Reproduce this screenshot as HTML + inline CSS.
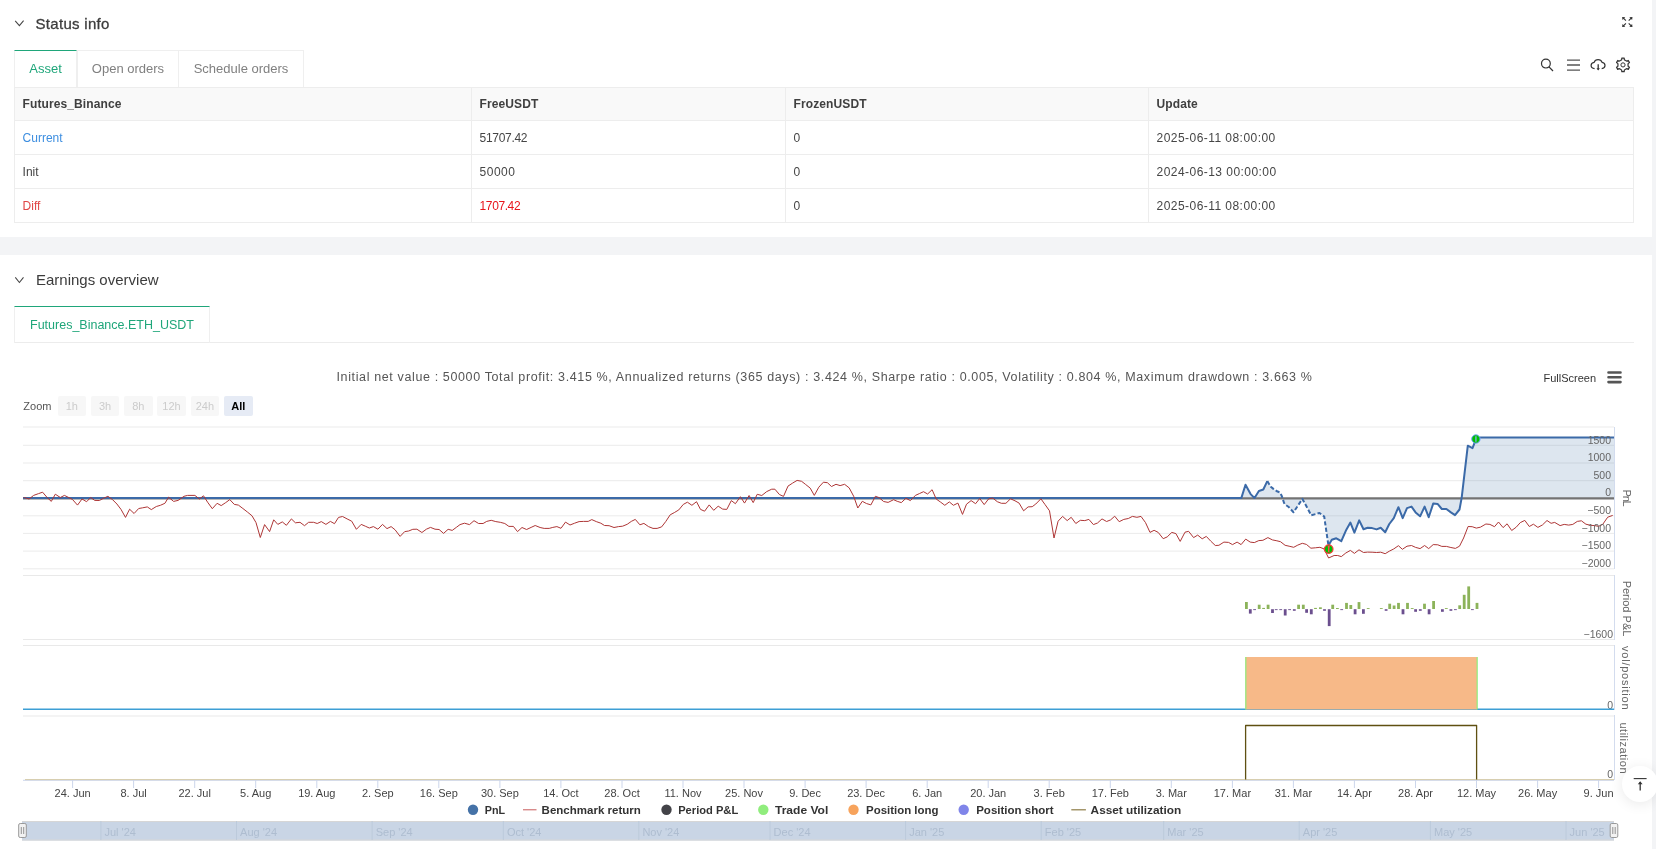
<!DOCTYPE html>
<html><head><meta charset="utf-8">
<style>
html,body{margin:0;padding:0;width:1656px;height:849px;overflow:hidden;background:#fff;font-family:"Liberation Sans",sans-serif;}
.a{position:absolute;white-space:nowrap;}
#strip{position:absolute;left:1652px;top:0;width:4px;height:849px;background:#f3f4f6;}
#band{position:absolute;left:0;top:237px;width:1652px;height:18px;background:#f3f4f6;}
.h2{font-size:15px;color:#3c3c3c;}
.tab{position:absolute;top:50px;height:37px;border:1px solid #efefef;border-bottom:none;box-sizing:border-box;font-size:13px;color:#808080;text-align:center;line-height:36px;}
table.t{position:absolute;left:14px;top:87px;border-collapse:collapse;font-size:12px;color:#454545;}
table.t td{border:1px solid #ededed;height:34px;padding:0 0 0 7.6px;box-sizing:border-box;}
.zb{position:absolute;top:396px;width:28.5px;height:19.5px;background:#f7f7f7;border-radius:2px;font-size:11px;color:#ccc;text-align:center;line-height:21px;}
table.t tr.hd td{letter-spacing:0.1px;height:33px;background:#f9f9f9;font-weight:bold;color:#404040;}
</style></head><body>
<div id="wrap" style="position:absolute;left:0;top:0;width:1656px;height:849px;will-change:transform;">
<div id="strip"></div>
<div id="band"></div>

<!-- Status info header -->
<svg class="a" style="left:8px;top:12px" width="24" height="24" viewBox="8 12 24 24"><path d="M15.2 20.9 L19.4 25.6 L23.6 20.7" fill="none" stroke="#444" stroke-width="1.05"/></svg>
<div class="a h2" style="left:35.5px;top:15px;letter-spacing:0.3px;-webkit-text-stroke:0.3px #3c3c3c;">Status info</div>
<svg class="a" style="left:1618px;top:13px" width="18" height="18" viewBox="1618 13 18 18"><g stroke="#333" stroke-width="1.1" fill="none"><path d="M1625.9 20.6 L1623.4 18.1 M1628.7 20.6 L1631.2 18.1 M1625.9 23.4 L1623.4 25.9 M1628.7 23.4 L1631.2 25.9"/></g><g fill="#333"><path d="M1622.1 16.9 L1625.3 17.3 L1622.5 20.1Z M1632.5 16.9 L1629.3 17.3 L1632.1 20.1Z M1622.1 27.1 L1625.3 26.7 L1622.5 23.9Z M1632.5 27.1 L1629.3 26.7 L1632.1 23.9Z"/></g></svg>

<!-- tabs -->
<div class="tab" style="left:14px;width:63px;border-top:1px solid #1fa67a;color:#1fa67a;line-height:35px;">Asset</div>
<div class="tab" style="left:77px;width:102px;">Open orders</div>
<div class="tab" style="left:178px;width:126px;">Schedule orders</div>

<!-- toolbar icons -->
<svg class="a" style="left:1538px;top:56px" width="100" height="20" viewBox="1538 56 100 20">
<g fill="none" stroke="#333" stroke-width="1.2">
<circle cx="1545.9" cy="63.6" r="4.4"/><path d="M1549 66.8 L1553 71"/>
<path d="M1567 60.1 h13 M1567 65 h13 M1567 70.1 h13" stroke="#555" stroke-width="1.3"/>
<path d="M1594.6 68.6 C1592.6 68.4 1591.1 67.2 1591.1 65.5 C1591.1 63.8 1592.4 62.6 1594.1 62.4 C1594.7 60.7 1596.2 59.6 1598.1 59.6 C1600 59.6 1601.5 60.8 1602.1 62.4 C1603.8 62.6 1605 63.9 1605 65.5 C1605 67.2 1603.6 68.4 1601.7 68.6"/>
<path d="M1598.2 64.3 V69.6" stroke-width="1.3"/><path d="M1596.5 68.3 L1598.2 70.6 L1599.9 68.3 Z" fill="#333" stroke="none"/>
<circle cx="1623" cy="64.9" r="2.1" stroke-width="1"/>
<path d="M1620.50 60.57 L1621.69 59.66 L1621.80 58.10 L1624.20 58.10 L1624.31 59.66 L1625.50 60.57 L1626.88 61.15 L1628.29 60.46 L1629.48 62.54 L1628.19 63.41 L1628.00 64.90 L1628.19 66.39 L1629.48 67.26 L1628.29 69.34 L1626.88 68.65 L1625.50 69.23 L1624.31 70.14 L1624.20 71.70 L1621.80 71.70 L1621.69 70.14 L1620.50 69.23 L1619.12 68.65 L1617.71 69.34 L1616.52 67.26 L1617.81 66.39 L1618.00 64.90 L1617.81 63.41 L1616.52 62.54 L1617.71 60.46 L1619.12 61.15Z" stroke-linejoin="round"/>
</g></svg>

<table class="t">
<tr class="hd" style="height:33px"><td style="width:457px">Futures_Binance</td><td style="width:314px">FreeUSDT</td><td style="width:363px">FrozenUSDT</td><td style="width:485px">Update</td></tr>
<tr><td style="color:#3d8ee0">Current</td><td style="letter-spacing:-0.3px">51707.42</td><td>0</td><td style="letter-spacing:0.45px">2025-06-11 08:00:00</td></tr>
<tr><td>Init</td><td style="letter-spacing:0.5px">50000</td><td>0</td><td style="letter-spacing:0.45px">2024-06-13 00:00:00</td></tr>
<tr><td style="color:#e04545">Diff</td><td style="color:#e8141b;letter-spacing:-0.4px">1707.42</td><td>0</td><td style="letter-spacing:0.45px">2025-06-11 08:00:00</td></tr>
</table>

<!-- Earnings overview -->
<svg class="a" style="left:8px;top:270px" width="24" height="24" viewBox="8 270 24 24"><path d="M15.3 277.3 L19.4 282.5 L23.5 277.3" fill="none" stroke="#444" stroke-width="1.05"/></svg>
<div class="a h2" style="left:36px;top:271px;">Earnings overview</div>
<div class="a" style="left:14px;top:342px;width:1620px;height:1px;background:#ececec"></div>
<div class="tab" style="left:14px;top:306px;width:196px;height:37px;border-top:1px solid #1fa67a;color:#1fa67a;font-size:12.5px;line-height:37px;">Futures_Binance.ETH_USDT</div>

<!-- CHART -->
<div class="a" style="left:0;width:1649px;top:370px;text-align:center;font-size:12.5px;letter-spacing:0.63px;color:#555;">Initial net value : 50000 Total profit: 3.415 %, Annualized returns (365 days) : 3.424 %, Sharpe ratio : 0.005, Volatility : 0.804 %, Maximum drawdown : 3.663 %</div>
<div class="a" style="left:1543.5px;top:372px;font-size:11px;color:#333;">FullScreen</div>
<svg class="a" style="left:1606px;top:370px" width="18" height="15" viewBox="0 0 18 15"><g stroke="#555" stroke-width="2.6" stroke-linecap="round"><path d="M2.5 2.5h12M2.5 7.3h12M2.5 12.1h12"/></g></svg>
<div class="a" style="left:23.3px;top:400px;font-size:11px;color:#555;">Zoom</div>
<div class="zb" style="left:57.5px">1h</div>
<div class="zb" style="left:90.8px">3h</div>
<div class="zb" style="left:124px">8h</div>
<div class="zb" style="left:157.3px">12h</div>
<div class="zb" style="left:190.6px">24h</div>
<div class="zb" style="left:224px;background:#e6ebf5;color:#000;font-weight:bold;">All</div>
<div class="a" style="left:1622px;top:766px;width:36px;height:36px;border-radius:50%;background:#fff;box-shadow:0 2px 14px rgba(0,0,0,0.09);"></div>
<svg class="a" style="left:1630px;top:774px" width="20" height="20" viewBox="1630 774 20 20"><path d="M1633.7 778.6h12.9" stroke="#333" stroke-width="1.1"/><path d="M1640.2 790.5v-8.5" stroke="#333" stroke-width="1.3"/><path d="M1637.8 784.3l2.4-3l2.4 3z" fill="#333"/></svg>
<svg class="a" style="left:0;top:0" width="1656" height="849" viewBox="0 0 1656 849">
<line x1="23" x2="1614" y1="427.0" y2="427.0" stroke="#ebebeb" stroke-width="1"/>
<line x1="23" x2="1614" y1="445.3" y2="445.3" stroke="#ebebeb" stroke-width="1"/>
<line x1="23" x2="1614" y1="463.0" y2="463.0" stroke="#ebebeb" stroke-width="1"/>
<line x1="23" x2="1614" y1="480.7" y2="480.7" stroke="#ebebeb" stroke-width="1"/>
<line x1="23" x2="1614" y1="515.8" y2="515.8" stroke="#ebebeb" stroke-width="1"/>
<line x1="23" x2="1614" y1="533.4" y2="533.4" stroke="#ebebeb" stroke-width="1"/>
<line x1="23" x2="1614" y1="551.1" y2="551.1" stroke="#ebebeb" stroke-width="1"/>
<line x1="23" x2="1614" y1="568.8" y2="568.8" stroke="#ebebeb" stroke-width="1"/>
<line x1="23" x2="1614" y1="575.5" y2="575.5" stroke="#e9e9e9" stroke-width="1"/>
<line x1="23" x2="1614" y1="639.5" y2="639.5" stroke="#e9e9e9" stroke-width="1"/>
<line x1="23" x2="1614" y1="645.5" y2="645.5" stroke="#e9e9e9" stroke-width="1"/>
<line x1="23" x2="1614" y1="716" y2="716" stroke="#e9e9e9" stroke-width="1"/>
<line x1="1614.5" x2="1614.5" y1="427" y2="569" stroke="#d3dcee" stroke-width="1"/>
<line x1="1614.5" x2="1614.5" y1="575" y2="640" stroke="#d3dcee" stroke-width="1"/>
<line x1="1614.5" x2="1614.5" y1="645" y2="710" stroke="#d3dcee" stroke-width="1"/>
<line x1="1614.5" x2="1614.5" y1="715" y2="780" stroke="#d3dcee" stroke-width="1"/>
<polygon points="1241.4,498.0 1241.4,497.9 1245.5,484.7 1250.6,494.1 1254.5,498.0 1258.9,491.0 1263.3,489.5 1267.3,481.1 1270.8,486.8 1273.7,489.1 1277.0,491.3 1279.8,492.4 1281.7,495.7 1284.0,502.8 1285.4,504.7 1288.7,507.0 1293.5,512.2 1302.4,498.9 1311.3,515.3 1319.5,513.0 1324.2,516.5 1328.4,545.4 1331.8,539.8 1336.3,538.3 1341.3,541.2 1345.8,530.8 1350.4,522.6 1354.4,532.6 1359.2,520.4 1363.5,529.2 1367.6,527.8 1372.1,528.1 1376.6,529.4 1380.7,527.8 1385.2,532.3 1389.3,524.0 1393.8,518.1 1398.4,507.2 1402.7,518.1 1407.0,508.1 1411.5,506.6 1415.6,512.4 1420.1,516.3 1424.6,506.6 1428.7,517.2 1433.2,503.6 1437.8,504.1 1441.8,509.0 1446.4,509.0 1450.9,512.4 1455.0,515.1 1459.5,509.5 1461.7,497.6 1467.8,445.7 1472.5,448.1 1476.0,439.1 1480.5,437.4 1614.0,437.4 1614.0,498.0" fill="#4572a7" fill-opacity="0.18"/>
<line x1="23" x2="1614" y1="498.4" y2="498.4" stroke="#737373" stroke-width="2.1"/>
<polyline points="23.0,497.9 1241.4,497.9 1245.5,484.7 1250.6,494.1 1254.5,498.0 1258.9,491.0 1263.3,489.5 1267.3,481.1" fill="none" stroke="#3b6aa8" stroke-width="2" stroke-linejoin="round"/>
<polyline points="1267.3,481.1 1270.8,486.8 1273.7,489.1 1277.0,491.3 1279.8,492.4 1281.7,495.7 1284.0,502.8 1285.4,504.7 1288.7,507.0 1293.5,512.2 1302.4,498.9 1311.3,515.3 1319.5,513.0 1324.2,516.5 1328.4,545.4" fill="none" stroke="#3b6aa8" stroke-width="2" stroke-dasharray="4.2,2.2" stroke-linejoin="round"/>
<polyline points="1328.4,545.4 1331.8,539.8 1336.3,538.3 1341.3,541.2 1345.8,530.8 1350.4,522.6 1354.4,532.6 1359.2,520.4 1363.5,529.2 1367.6,527.8 1372.1,528.1 1376.6,529.4 1380.7,527.8 1385.2,532.3 1389.3,524.0 1393.8,518.1 1398.4,507.2 1402.7,518.1 1407.0,508.1 1411.5,506.6 1415.6,512.4 1420.1,516.3 1424.6,506.6 1428.7,517.2 1433.2,503.6 1437.8,504.1 1441.8,509.0 1446.4,509.0 1450.9,512.4 1455.0,515.1 1459.5,509.5 1461.7,497.6 1467.8,445.7 1472.5,448.1 1476.0,439.1 1480.5,437.4 1614.0,437.4" fill="none" stroke="#3b6aa8" stroke-width="2" stroke-linejoin="round"/>
<polyline points="23.5,497.8 24.5,497.6 29.1,499.0 33.6,495.4 38.6,493.6 42.6,492.2 47.2,497.6 51.3,501.4 55.3,494.2 60.3,497.5 64.4,495.4 68.9,497.6 72.5,499.5 77.5,505.1 82.0,499.0 86.6,501.7 90.7,497.5 94.7,500.4 99.3,500.5 103.3,498.4 107.9,496.3 112.4,499.5 116.9,504.0 121.0,509.4 125.5,517.4 129.6,509.2 134.1,513.5 138.7,508.5 142.7,507.8 147.3,506.9 151.3,509.6 156.3,506.5 160.4,505.3 164.9,503.3 168.6,497.2 173.6,501.4 178.1,500.4 184.0,496.3 187.6,495.4 194.9,495.4 199.4,499.0 203.5,495.8 207.6,502.2 212.3,508.7 217.1,503.3 221.2,505.6 225.7,502.6 229.8,499.6 234.3,504.4 238.4,505.1 242.9,508.5 247.4,512.0 252.0,515.8 256.0,522.6 260.3,537.5 264.6,524.6 269.6,531.6 273.7,519.8 277.8,524.4 282.3,521.9 286.4,525.3 291.4,518.9 295.4,522.8 300.0,522.3 304.5,525.7 308.6,522.3 313.6,522.3 317.2,523.5 321.3,521.6 325.9,524.4 330.4,521.4 334.5,523.7 338.5,517.4 342.6,516.5 347.1,518.9 351.7,521.2 356.4,529.3 361.2,524.4 365.3,526.2 369.3,528.0 373.4,526.6 377.9,529.2 382.5,524.4 387.0,528.6 391.1,526.6 395.1,529.8 400.1,536.4 404.7,531.6 408.7,531.0 412.8,529.3 416.9,529.2 421.9,532.5 426.4,529.2 430.5,527.4 435.0,529.2 439.1,529.5 443.6,533.4 448.1,529.3 452.2,530.4 456.7,527.1 460.0,524.6 464.5,523.2 469.5,524.6 474.0,520.7 478.6,523.5 483.1,523.5 486.7,521.4 491.2,520.3 495.8,521.6 500.3,522.3 504.8,523.5 508.9,526.4 513.4,526.4 517.5,531.6 522.0,527.5 526.6,529.5 531.1,527.4 535.2,525.5 540.1,527.5 544.2,528.4 549.2,528.4 552.8,527.4 556.9,526.6 561.0,528.3 565.5,522.1 570.0,525.0 574.6,523.2 579.1,521.6 583.6,521.4 588.2,521.4 591.8,519.6 596.3,521.6 600.8,523.2 604.5,525.5 609.1,525.7 614.0,527.5 618.6,526.6 622.6,526.2 627.2,524.3 631.3,521.4 635.3,519.4 639.9,524.8 643.9,523.4 648.5,526.6 653.0,528.4 657.1,528.4 661.6,526.9 665.7,521.6 670.2,514.8 674.3,512.6 678.8,509.9 683.3,504.4 687.4,502.2 691.9,505.3 696.5,501.7 700.5,509.4 704.6,511.2 709.2,504.9 713.7,510.3 718.2,506.2 722.7,509.1 726.8,509.4 731.3,500.6 735.4,503.7 740.4,496.7 744.5,503.1 749.1,495.5 753.2,502.6 757.2,494.3 761.8,495.5 766.7,491.6 771.7,489.2 774.9,489.2 779.4,494.5 783.5,496.4 788.0,486.1 792.6,483.1 797.1,480.4 801.6,481.3 805.7,484.5 810.2,488.1 814.3,495.4 818.8,487.2 823.4,482.2 827.4,482.7 831.5,486.5 836.0,484.3 840.1,485.6 844.6,484.3 849.2,487.9 853.7,496.3 857.8,508.0 862.3,501.3 866.4,503.5 870.9,504.9 875.4,496.3 879.1,497.6 883.6,501.5 888.1,502.4 893.6,499.7 897.2,501.3 901.3,502.6 905.9,498.3 910.4,500.6 915.4,495.4 919.4,493.6 923.5,491.7 927.6,494.0 932.1,489.7 936.2,499.0 940.7,502.2 944.8,505.3 949.3,501.9 953.4,505.3 957.9,503.1 962.5,514.4 966.5,504.2 971.1,500.6 975.6,503.7 979.7,498.5 984.2,504.6 988.7,498.8 992.8,498.1 997.3,501.7 1001.4,503.3 1005.9,503.3 1010.5,498.8 1015.0,500.8 1019.1,503.1 1023.6,510.8 1028.1,506.9 1032.2,506.7 1035.8,504.0 1040.9,498.8 1045.0,504.5 1049.5,510.8 1054.0,538.0 1058.1,521.2 1062.6,516.4 1067.2,520.6 1071.2,517.3 1075.8,523.5 1080.3,520.3 1084.8,520.6 1088.9,519.4 1093.4,524.6 1097.5,523.0 1102.0,518.9 1106.6,521.5 1110.6,519.9 1114.7,516.2 1119.2,521.7 1123.8,519.4 1128.3,518.5 1132.4,516.4 1136.9,517.3 1141.0,516.4 1145.5,522.6 1150.0,532.4 1154.1,530.3 1158.2,532.4 1163.2,538.7 1167.2,536.9 1171.8,532.4 1175.9,533.6 1180.2,541.4 1185.0,532.2 1188.6,531.3 1193.6,537.6 1197.7,535.1 1202.2,538.8 1206.3,536.4 1210.8,541.2 1215.3,545.5 1218.9,545.3 1223.9,542.1 1228.5,542.4 1232.5,544.6 1237.1,542.1 1241.1,544.6 1245.7,539.1 1250.2,542.1 1254.3,542.6 1258.8,540.6 1262.9,540.3 1267.9,537.6 1272.4,539.9 1276.9,540.8 1280.5,541.7 1285.1,545.3 1289.1,546.2 1293.7,547.3 1297.8,545.1 1302.3,543.3 1306.4,544.4 1310.9,548.2 1315.4,547.8 1319.9,547.3 1324.0,548.9 1328.6,558.0 1334.1,555.5 1337.7,555.5 1341.3,556.6 1345.8,553.0 1350.4,550.4 1354.4,553.4 1359.0,549.8 1363.5,552.5 1367.6,552.1 1372.1,552.2 1376.6,552.5 1380.7,552.2 1385.2,553.7 1389.3,551.2 1393.8,548.9 1398.4,545.7 1402.4,549.3 1407.0,546.2 1411.5,545.5 1415.6,547.4 1420.1,548.6 1424.6,545.5 1428.7,548.6 1433.2,544.6 1437.8,544.8 1441.8,546.4 1446.4,546.4 1450.9,547.5 1455.4,548.4 1459.5,546.2 1463.6,538.0 1468.1,526.5 1472.2,526.7 1476.3,528.1 1480.4,527.2 1485.9,524.0 1489.9,524.4 1494.5,526.7 1498.5,522.0 1503.1,527.6 1507.1,523.8 1511.7,530.5 1516.2,527.2 1520.3,522.6 1524.8,520.4 1529.3,526.5 1533.4,524.2 1537.9,527.4 1542.5,524.9 1547.0,520.5 1551.1,523.3 1554.7,522.4 1560.1,525.6 1564.2,524.4 1568.7,525.1 1572.8,524.4 1577.3,521.4 1581.4,520.8 1585.9,524.2 1590.5,525.3 1594.5,525.6 1598.6,526.3 1602.7,524.4 1607.7,517.2 1612.7,515.4" fill="none" stroke="#ad3535" stroke-width="1" stroke-linejoin="round"/>
<circle cx="1328.7" cy="549.1" r="4.3" fill="#00c000" stroke="#ff3b3b" stroke-width="1.2"/><path d="M1328.7 546.5 v5.5" stroke="#ff4b4b" stroke-width="1.4"/><circle cx="1328.7" cy="546.8" r="1" fill="#ff4b4b"/>
<circle cx="1475.9" cy="439" r="4.2" fill="#00c000" stroke="#7aa6ff" stroke-width="1"/><path d="M1475.9 436.3 v5.5" stroke="#79b0d8" stroke-width="1.4"/>
<text x="1611" y="443.6" text-anchor="end" font-size="10.5" fill="#666" font-family="Liberation Sans">1500</text>
<text x="1611" y="461.3" text-anchor="end" font-size="10.5" fill="#666" font-family="Liberation Sans">1000</text>
<text x="1611" y="479.0" text-anchor="end" font-size="10.5" fill="#666" font-family="Liberation Sans">500</text>
<text x="1611" y="496.3" text-anchor="end" font-size="10.5" fill="#666" font-family="Liberation Sans">0</text>
<text x="1611" y="514.1" text-anchor="end" font-size="10.5" fill="#666" font-family="Liberation Sans">−500</text>
<text x="1611" y="531.7" text-anchor="end" font-size="10.5" fill="#666" font-family="Liberation Sans">−1000</text>
<text x="1611" y="549.4" text-anchor="end" font-size="10.5" fill="#666" font-family="Liberation Sans">−1500</text>
<text x="1611" y="567.1" text-anchor="end" font-size="10.5" fill="#666" font-family="Liberation Sans">−2000</text>
<text x="1626.5" y="498.1" transform="rotate(90 1626.5 498.1)" text-anchor="middle" dominant-baseline="central" font-size="11" fill="#666" font-family="Liberation Sans" textLength="17" lengthAdjust="spacing">PnL</text>
<text x="1626.5" y="608.5" transform="rotate(90 1626.5 608.5)" text-anchor="middle" dominant-baseline="central" font-size="11" fill="#666" font-family="Liberation Sans" textLength="55.7" lengthAdjust="spacing">Period P&amp;L</text>
<text x="1625.6" y="677.8" transform="rotate(90 1625.6 677.8)" text-anchor="middle" dominant-baseline="central" font-size="11" fill="#666" font-family="Liberation Sans" textLength="63.6" lengthAdjust="spacing">vol/position</text>
<text x="1624.4" y="748" transform="rotate(90 1624.4 748)" text-anchor="middle" dominant-baseline="central" font-size="11" fill="#666" font-family="Liberation Sans" textLength="51.2" lengthAdjust="spacing">utilization</text>
<text x="1613" y="638" text-anchor="end" font-size="10.5" fill="#666" font-family="Liberation Sans">−1600</text>
<text x="1613" y="708.5" text-anchor="end" font-size="10.5" fill="#666" font-family="Liberation Sans">0</text>
<text x="1613" y="778" text-anchor="end" font-size="10.5" fill="#666" font-family="Liberation Sans">0</text>
<rect x="1245.0" y="602.0" width="2.8" height="7.0" fill="#8cb35a"/>
<rect x="1248.9" y="609.2" width="2.8" height="4.4" fill="#6b4f8e"/>
<rect x="1253.2" y="609.2" width="2.8" height="0.9" fill="#6b4f8e"/>
<rect x="1257.8" y="604.7" width="2.8" height="4.3" fill="#8cb35a"/>
<rect x="1262.2" y="607.9" width="2.8" height="1.1" fill="#8cb35a"/>
<rect x="1266.7" y="604.7" width="2.8" height="4.3" fill="#8cb35a"/>
<rect x="1271.1" y="609.2" width="2.8" height="3.8" fill="#6b4f8e"/>
<rect x="1274.8" y="609.2" width="2.8" height="0.9" fill="#6b4f8e"/>
<rect x="1279.3" y="609.2" width="2.8" height="0.9" fill="#6b4f8e"/>
<rect x="1283.8" y="609.2" width="2.8" height="6.3" fill="#6b4f8e"/>
<rect x="1288.2" y="609.2" width="2.8" height="0.9" fill="#6b4f8e"/>
<rect x="1292.9" y="609.2" width="2.8" height="1.6" fill="#6b4f8e"/>
<rect x="1297.2" y="604.7" width="2.8" height="4.3" fill="#8cb35a"/>
<rect x="1301.9" y="604.7" width="2.8" height="4.3" fill="#8cb35a"/>
<rect x="1305.2" y="609.2" width="2.8" height="3.6" fill="#6b4f8e"/>
<rect x="1309.9" y="609.2" width="2.8" height="5.1" fill="#6b4f8e"/>
<rect x="1314.1" y="607.9" width="2.8" height="1.1" fill="#8cb35a"/>
<rect x="1319.0" y="607.3" width="2.8" height="1.7" fill="#8cb35a"/>
<rect x="1323.1" y="609.2" width="2.8" height="1.6" fill="#6b4f8e"/>
<rect x="1327.8" y="609.2" width="2.8" height="16.9" fill="#6b4f8e"/>
<rect x="1331.3" y="604.7" width="2.8" height="4.3" fill="#8cb35a"/>
<rect x="1336.0" y="608.0" width="2.8" height="1.0" fill="#8cb35a"/>
<rect x="1340.3" y="609.2" width="2.8" height="0.9" fill="#6b4f8e"/>
<rect x="1345.1" y="602.9" width="2.8" height="6.1" fill="#8cb35a"/>
<rect x="1349.4" y="605.0" width="2.8" height="4.0" fill="#8cb35a"/>
<rect x="1353.7" y="609.2" width="2.8" height="5.1" fill="#6b4f8e"/>
<rect x="1357.6" y="602.1" width="2.8" height="6.9" fill="#8cb35a"/>
<rect x="1362.0" y="609.2" width="2.8" height="4.6" fill="#6b4f8e"/>
<rect x="1366.8" y="608.1" width="2.8" height="0.9" fill="#8cb35a"/>
<rect x="1379.9" y="608.1" width="2.8" height="0.9" fill="#8cb35a"/>
<rect x="1384.7" y="609.2" width="2.8" height="1.6" fill="#6b4f8e"/>
<rect x="1388.3" y="603.7" width="2.8" height="5.3" fill="#8cb35a"/>
<rect x="1392.7" y="605.5" width="2.8" height="3.5" fill="#8cb35a"/>
<rect x="1397.1" y="602.9" width="2.8" height="6.1" fill="#8cb35a"/>
<rect x="1401.6" y="609.2" width="2.8" height="5.1" fill="#6b4f8e"/>
<rect x="1406.1" y="602.9" width="2.8" height="6.1" fill="#8cb35a"/>
<rect x="1410.8" y="608.1" width="2.8" height="0.9" fill="#8cb35a"/>
<rect x="1414.2" y="609.2" width="2.8" height="2.6" fill="#6b4f8e"/>
<rect x="1418.9" y="609.2" width="2.8" height="1.6" fill="#6b4f8e"/>
<rect x="1423.1" y="603.7" width="2.8" height="5.3" fill="#8cb35a"/>
<rect x="1427.7" y="609.2" width="2.8" height="5.1" fill="#6b4f8e"/>
<rect x="1432.2" y="601.0" width="2.8" height="8.0" fill="#8cb35a"/>
<rect x="1441.0" y="609.2" width="2.8" height="2.6" fill="#6b4f8e"/>
<rect x="1444.9" y="608.1" width="2.8" height="0.9" fill="#8cb35a"/>
<rect x="1449.5" y="609.2" width="2.8" height="1.6" fill="#6b4f8e"/>
<rect x="1454.0" y="609.2" width="2.8" height="0.9" fill="#6b4f8e"/>
<rect x="1458.3" y="605.3" width="2.8" height="3.7" fill="#8cb35a"/>
<rect x="1462.8" y="594.8" width="2.8" height="14.2" fill="#8cb35a"/>
<rect x="1467.3" y="586.4" width="2.8" height="22.6" fill="#8cb35a"/>
<rect x="1471.0" y="609.2" width="2.8" height="0.9" fill="#6b4f8e"/>
<rect x="1475.6" y="602.9" width="2.8" height="6.1" fill="#8cb35a"/>
<line x1="23" x2="1614" y1="709.3" y2="709.3" stroke="#3d9fd5" stroke-width="1.6"/>
<rect x="1245.5" y="657" width="231.5" height="52.5" fill="#f7b988"/>
<line x1="1245.8" x2="1245.8" y1="657" y2="709.5" stroke="#90ed7d" stroke-width="1.2"/>
<line x1="1477.2" x2="1477.2" y1="657" y2="709.5" stroke="#90ed7d" stroke-width="1.2"/>
<line x1="23" x2="1614" y1="780.3" y2="780.3" stroke="#ccd6eb" stroke-width="1"/>
<line x1="25" x2="1614" y1="779.6" y2="779.6" stroke="#d3c9a8" stroke-width="1"/>
<polyline points="1245.6,779.5 1245.6,725.5 1476.6,725.5 1476.6,779.5" fill="none" stroke="#5f5012" stroke-width="1.3" stroke-linejoin="round"/>
<line x1="72.6" x2="72.6" y1="780" y2="788" stroke="#ccd6eb" stroke-width="1"/>
<text x="72.6" y="796.9" text-anchor="middle" font-size="11" fill="#444" font-family="Liberation Sans">24. Jun</text>
<line x1="133.6" x2="133.6" y1="780" y2="788" stroke="#ccd6eb" stroke-width="1"/>
<text x="133.6" y="796.9" text-anchor="middle" font-size="11" fill="#444" font-family="Liberation Sans">8. Jul</text>
<line x1="194.7" x2="194.7" y1="780" y2="788" stroke="#ccd6eb" stroke-width="1"/>
<text x="194.7" y="796.9" text-anchor="middle" font-size="11" fill="#444" font-family="Liberation Sans">22. Jul</text>
<line x1="255.7" x2="255.7" y1="780" y2="788" stroke="#ccd6eb" stroke-width="1"/>
<text x="255.7" y="796.9" text-anchor="middle" font-size="11" fill="#444" font-family="Liberation Sans">5. Aug</text>
<line x1="316.8" x2="316.8" y1="780" y2="788" stroke="#ccd6eb" stroke-width="1"/>
<text x="316.8" y="796.9" text-anchor="middle" font-size="11" fill="#444" font-family="Liberation Sans">19. Aug</text>
<line x1="377.8" x2="377.8" y1="780" y2="788" stroke="#ccd6eb" stroke-width="1"/>
<text x="377.8" y="796.9" text-anchor="middle" font-size="11" fill="#444" font-family="Liberation Sans">2. Sep</text>
<line x1="438.8" x2="438.8" y1="780" y2="788" stroke="#ccd6eb" stroke-width="1"/>
<text x="438.8" y="796.9" text-anchor="middle" font-size="11" fill="#444" font-family="Liberation Sans">16. Sep</text>
<line x1="499.9" x2="499.9" y1="780" y2="788" stroke="#ccd6eb" stroke-width="1"/>
<text x="499.9" y="796.9" text-anchor="middle" font-size="11" fill="#444" font-family="Liberation Sans">30. Sep</text>
<line x1="560.9" x2="560.9" y1="780" y2="788" stroke="#ccd6eb" stroke-width="1"/>
<text x="560.9" y="796.9" text-anchor="middle" font-size="11" fill="#444" font-family="Liberation Sans">14. Oct</text>
<line x1="622.0" x2="622.0" y1="780" y2="788" stroke="#ccd6eb" stroke-width="1"/>
<text x="622.0" y="796.9" text-anchor="middle" font-size="11" fill="#444" font-family="Liberation Sans">28. Oct</text>
<line x1="683.0" x2="683.0" y1="780" y2="788" stroke="#ccd6eb" stroke-width="1"/>
<text x="683.0" y="796.9" text-anchor="middle" font-size="11" fill="#444" font-family="Liberation Sans">11. Nov</text>
<line x1="744.0" x2="744.0" y1="780" y2="788" stroke="#ccd6eb" stroke-width="1"/>
<text x="744.0" y="796.9" text-anchor="middle" font-size="11" fill="#444" font-family="Liberation Sans">25. Nov</text>
<line x1="805.1" x2="805.1" y1="780" y2="788" stroke="#ccd6eb" stroke-width="1"/>
<text x="805.1" y="796.9" text-anchor="middle" font-size="11" fill="#444" font-family="Liberation Sans">9. Dec</text>
<line x1="866.1" x2="866.1" y1="780" y2="788" stroke="#ccd6eb" stroke-width="1"/>
<text x="866.1" y="796.9" text-anchor="middle" font-size="11" fill="#444" font-family="Liberation Sans">23. Dec</text>
<line x1="927.2" x2="927.2" y1="780" y2="788" stroke="#ccd6eb" stroke-width="1"/>
<text x="927.2" y="796.9" text-anchor="middle" font-size="11" fill="#444" font-family="Liberation Sans">6. Jan</text>
<line x1="988.2" x2="988.2" y1="780" y2="788" stroke="#ccd6eb" stroke-width="1"/>
<text x="988.2" y="796.9" text-anchor="middle" font-size="11" fill="#444" font-family="Liberation Sans">20. Jan</text>
<line x1="1049.2" x2="1049.2" y1="780" y2="788" stroke="#ccd6eb" stroke-width="1"/>
<text x="1049.2" y="796.9" text-anchor="middle" font-size="11" fill="#444" font-family="Liberation Sans">3. Feb</text>
<line x1="1110.3" x2="1110.3" y1="780" y2="788" stroke="#ccd6eb" stroke-width="1"/>
<text x="1110.3" y="796.9" text-anchor="middle" font-size="11" fill="#444" font-family="Liberation Sans">17. Feb</text>
<line x1="1171.3" x2="1171.3" y1="780" y2="788" stroke="#ccd6eb" stroke-width="1"/>
<text x="1171.3" y="796.9" text-anchor="middle" font-size="11" fill="#444" font-family="Liberation Sans">3. Mar</text>
<line x1="1232.4" x2="1232.4" y1="780" y2="788" stroke="#ccd6eb" stroke-width="1"/>
<text x="1232.4" y="796.9" text-anchor="middle" font-size="11" fill="#444" font-family="Liberation Sans">17. Mar</text>
<line x1="1293.4" x2="1293.4" y1="780" y2="788" stroke="#ccd6eb" stroke-width="1"/>
<text x="1293.4" y="796.9" text-anchor="middle" font-size="11" fill="#444" font-family="Liberation Sans">31. Mar</text>
<line x1="1354.4" x2="1354.4" y1="780" y2="788" stroke="#ccd6eb" stroke-width="1"/>
<text x="1354.4" y="796.9" text-anchor="middle" font-size="11" fill="#444" font-family="Liberation Sans">14. Apr</text>
<line x1="1415.5" x2="1415.5" y1="780" y2="788" stroke="#ccd6eb" stroke-width="1"/>
<text x="1415.5" y="796.9" text-anchor="middle" font-size="11" fill="#444" font-family="Liberation Sans">28. Apr</text>
<line x1="1476.5" x2="1476.5" y1="780" y2="788" stroke="#ccd6eb" stroke-width="1"/>
<text x="1476.5" y="796.9" text-anchor="middle" font-size="11" fill="#444" font-family="Liberation Sans">12. May</text>
<line x1="1537.6" x2="1537.6" y1="780" y2="788" stroke="#ccd6eb" stroke-width="1"/>
<text x="1537.6" y="796.9" text-anchor="middle" font-size="11" fill="#444" font-family="Liberation Sans">26. May</text>
<line x1="1598.6" x2="1598.6" y1="780" y2="788" stroke="#ccd6eb" stroke-width="1"/>
<text x="1598.6" y="796.9" text-anchor="middle" font-size="11" fill="#444" font-family="Liberation Sans">9. Jun</text>
<circle cx="473" cy="809.8" r="5.2" fill="#4572a7"/><text x="484.8" y="814" font-size="11.5" font-weight="bold" fill="#333" font-family="Liberation Sans" textLength="20.3" lengthAdjust="spacingAndGlyphs">PnL</text>
<line x1="523" x2="536.5" y1="809.8" y2="809.8" stroke="#c85a5a" stroke-width="1"/><text x="541.6" y="814" font-size="11.5" font-weight="bold" fill="#333" font-family="Liberation Sans" textLength="99.2" lengthAdjust="spacingAndGlyphs">Benchmark return</text>
<circle cx="666.5" cy="809.8" r="5.2" fill="#434348"/><text x="678.2" y="814" font-size="11.5" font-weight="bold" fill="#333" font-family="Liberation Sans" textLength="60" lengthAdjust="spacingAndGlyphs">Period P&amp;L</text>
<circle cx="763.3" cy="809.8" r="5.2" fill="#90ed7d"/><text x="775" y="814" font-size="11.5" font-weight="bold" fill="#333" font-family="Liberation Sans" textLength="53.3" lengthAdjust="spacingAndGlyphs">Trade Vol</text>
<circle cx="853.5" cy="809.8" r="5.2" fill="#f7a35c"/><text x="866" y="814" font-size="11.5" font-weight="bold" fill="#333" font-family="Liberation Sans" textLength="72.5" lengthAdjust="spacingAndGlyphs">Position long</text>
<circle cx="963.7" cy="809.8" r="5.2" fill="#8085e9"/><text x="976.2" y="814" font-size="11.5" font-weight="bold" fill="#333" font-family="Liberation Sans" textLength="77.3" lengthAdjust="spacingAndGlyphs">Position short</text>
<line x1="1071.3" x2="1085.9" y1="809.8" y2="809.8" stroke="#8d7b46" stroke-width="1.2"/><text x="1090.6" y="814" font-size="11.5" font-weight="bold" fill="#333" font-family="Liberation Sans" textLength="90.7" lengthAdjust="spacingAndGlyphs">Asset utilization</text>
<rect x="22" y="821" width="1592" height="19.5" fill="#c9d5e5"/>
<line x1="22" x2="1614" y1="821.5" y2="821.5" stroke="#d6d6d6" stroke-width="1"/>
<line x1="22" x2="1614" y1="840" y2="840" stroke="#d6d6d6" stroke-width="1"/>
<line x1="100.9" x2="100.9" y1="821" y2="840" stroke="#bccadb" stroke-width="1"/>
<text x="104.5" y="836.2" font-size="11" fill="#aebdd0" font-family="Liberation Sans">Jul '24</text>
<line x1="236.5" x2="236.5" y1="821" y2="840" stroke="#bccadb" stroke-width="1"/>
<text x="240.1" y="836.2" font-size="11" fill="#aebdd0" font-family="Liberation Sans">Aug '24</text>
<line x1="372.1" x2="372.1" y1="821" y2="840" stroke="#bccadb" stroke-width="1"/>
<text x="375.7" y="836.2" font-size="11" fill="#aebdd0" font-family="Liberation Sans">Sep '24</text>
<line x1="503.3" x2="503.3" y1="821" y2="840" stroke="#bccadb" stroke-width="1"/>
<text x="506.9" y="836.2" font-size="11" fill="#aebdd0" font-family="Liberation Sans">Oct '24</text>
<line x1="638.8" x2="638.8" y1="821" y2="840" stroke="#bccadb" stroke-width="1"/>
<text x="642.4" y="836.2" font-size="11" fill="#aebdd0" font-family="Liberation Sans">Nov '24</text>
<line x1="770.0" x2="770.0" y1="821" y2="840" stroke="#bccadb" stroke-width="1"/>
<text x="773.6" y="836.2" font-size="11" fill="#aebdd0" font-family="Liberation Sans">Dec '24</text>
<line x1="905.6" x2="905.6" y1="821" y2="840" stroke="#bccadb" stroke-width="1"/>
<text x="909.2" y="836.2" font-size="11" fill="#aebdd0" font-family="Liberation Sans">Jan '25</text>
<line x1="1041.2" x2="1041.2" y1="821" y2="840" stroke="#bccadb" stroke-width="1"/>
<text x="1044.8" y="836.2" font-size="11" fill="#aebdd0" font-family="Liberation Sans">Feb '25</text>
<line x1="1163.7" x2="1163.7" y1="821" y2="840" stroke="#bccadb" stroke-width="1"/>
<text x="1167.3" y="836.2" font-size="11" fill="#aebdd0" font-family="Liberation Sans">Mar '25</text>
<line x1="1299.2" x2="1299.2" y1="821" y2="840" stroke="#bccadb" stroke-width="1"/>
<text x="1302.8" y="836.2" font-size="11" fill="#aebdd0" font-family="Liberation Sans">Apr '25</text>
<line x1="1430.4" x2="1430.4" y1="821" y2="840" stroke="#bccadb" stroke-width="1"/>
<text x="1434.0" y="836.2" font-size="11" fill="#aebdd0" font-family="Liberation Sans">May '25</text>
<line x1="1566.0" x2="1566.0" y1="821" y2="840" stroke="#bccadb" stroke-width="1"/>
<text x="1569.6" y="836.2" font-size="11" fill="#aebdd0" font-family="Liberation Sans">Jun '25</text>
<rect x="18.7" y="823.5" width="7.6" height="14" rx="1.5" fill="#f2f2f2" stroke="#999" stroke-width="1"/>
<line x1="21.3" x2="21.3" y1="827" y2="834" stroke="#888" stroke-width="0.9"/><line x1="23.7" x2="23.7" y1="827" y2="834" stroke="#888" stroke-width="0.9"/>
<rect x="1610.2" y="823.5" width="7.6" height="14" rx="1.5" fill="#f2f2f2" stroke="#999" stroke-width="1"/>
<line x1="1612.8" x2="1612.8" y1="827" y2="834" stroke="#888" stroke-width="0.9"/><line x1="1615.2" x2="1615.2" y1="827" y2="834" stroke="#888" stroke-width="0.9"/>
</svg>

</div>
</body></html>
